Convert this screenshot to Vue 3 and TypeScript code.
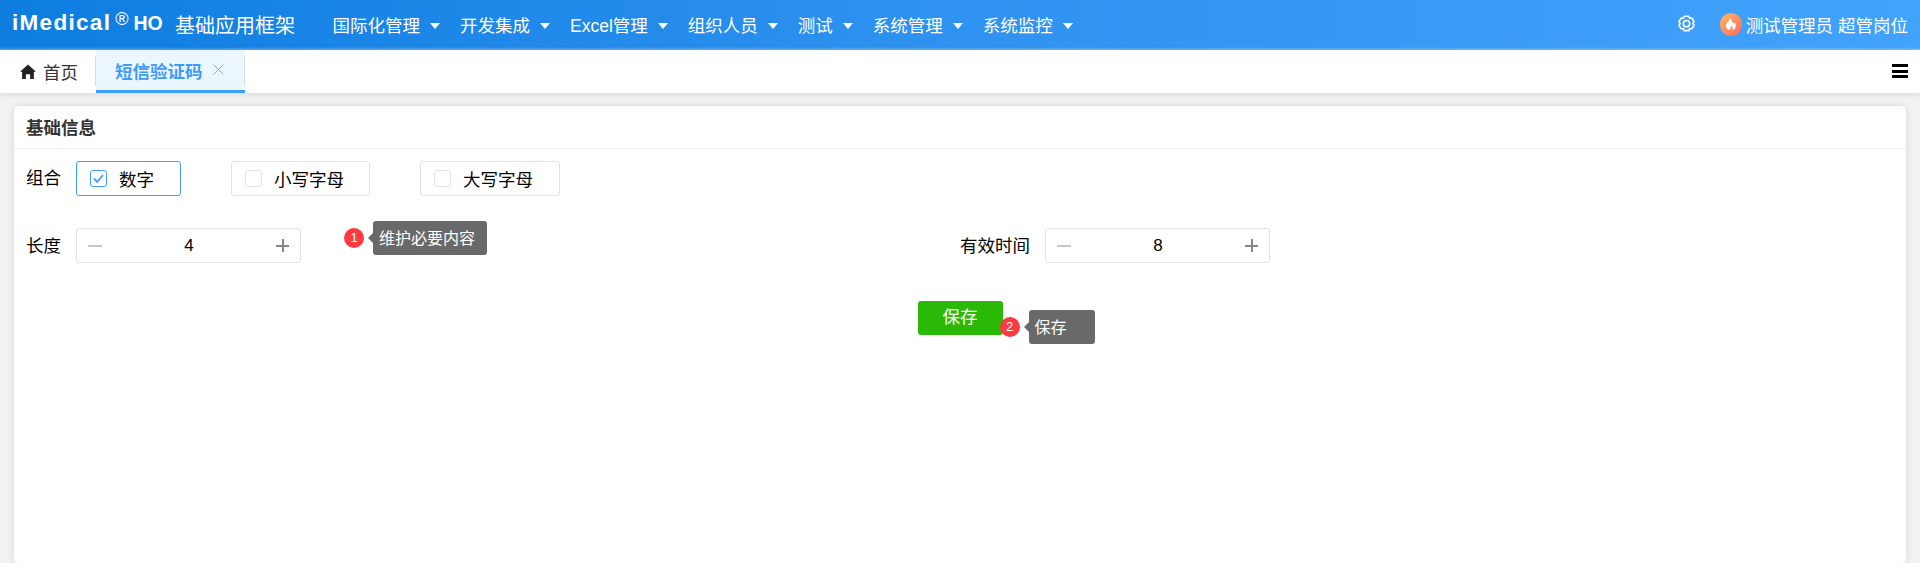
<script setup lang="ts">
const navItems: string[] = ['国际化管理', '开发集成', 'Excel管理', '组织人员', '测试', '系统管理', '系统监控']
const checks = [
  { label: '数字', on: true },
  { label: '小写字母', on: false },
  { label: '大写字母', on: false },
]
</script>

<template>
  <div class="page">
    <header class="topbar">
      <div class="logo">
        <span class="logo-main">iMedical</span><span class="logo-reg">®</span><span class="logo-ho">HO</span>
      </div>
      <div class="app-title">基础应用框架</div>
      <nav class="nav">
        <div v-for="item in navItems" :key="item" class="nav-item">
          <span>{{ item }}</span><i class="caret"></i>
        </div>
      </nav>
      <div class="top-right">
        <svg class="gear" width="19" height="19" viewBox="0 0 18 18" fill="none" stroke="#fff" stroke-width="1.5">
          <path d="M6.800 1.200h4.400l.7 1.900 2.200-.2 2.100 3.400-1.200 1.700 1.200 1.700-2.100 3.400-2.200-.2-.7 1.900H6.800l-.7-1.900-2.200.2-2.100-3.400L3 8 1.800 6.300l2.100-3.400 2.200.2z" stroke-linejoin="round" />
          <circle cx="9" cy="8.200" r="3" />
        </svg>
        <svg class="avatar" width="22" height="23" viewBox="0 0 22 23">
          <defs>
            <linearGradient id="av" x1="0" y1="0" x2="1" y2="1">
              <stop offset="0" stop-color="#fdb85f" />
              <stop offset="1" stop-color="#fb6a63" />
            </linearGradient>
          </defs>
          <ellipse cx="11" cy="11.500" rx="11" ry="11.500" fill="url(#av)" />
          <path d="M10 4.500c.4 2.500 2.600 3.700 3 6.300.8-.2 1.300-.9 1.500-1.600 1.900 2.200 1.700 6.500-1.300 7.600-.6.200-.9-.1-.7-.6.400-1.300-.1-2.500-1-3.500-.6 1-1.200 1.800-1.100 3.300 0 .6-.4.900-1 .7C5.500 15.600 5 12.400 7 10c.8-1 2.600-2.600 3-5.500z" fill="#fff" />
        </svg>
        <span class="user">测试管理员 超管岗位</span>
      </div>
    </header>

    <div class="tabs">
      <div class="tab tab-home">
        <svg width="16" height="15" viewBox="0 0 15 14"><path d="M7.500 0.500 15 7.200h-2V14H9.500V9.500h-4V14H2V7.200H0z" fill="#222" /></svg>
        <span>首页</span>
      </div>
      <div class="tab tab-active">
        <span>短信验证码</span>
        <svg class="close" width="11" height="11" viewBox="0 0 11 11" stroke="#7fa9e0" stroke-width="1" fill="none"><path d="M.5.500l10 10M10.500.500l-10 10" /></svg>
      </div>
      <div class="tab-fill"></div>
      <div class="hamburger"><i></i><i></i><i></i></div>
    </div>

    <main class="content">
      <section class="card">
        <div class="card-title">基础信息</div>
        <div class="card-body">
          <div class="row row-checks">
            <label class="field-label">组合</label>
            <div v-for="c in checks" :key="c.label" class="check" :class="{ 'check-on': c.on }">
              <span class="box">
                <svg v-if="c.on" width="13" height="11" viewBox="0 0 13 11" fill="none" stroke="#409eff" stroke-width="1.900"><path d="M2 5.500 5.200 8.800 11 2" /></svg>
              </span>
              <span>{{ c.label }}</span>
            </div>
          </div>

          <div class="row-grid">
            <div class="field">
              <label class="field-label">长度</label>
              <div class="stepper">
                <span class="sym sym-minus"></span>
                <span class="num">4</span>
                <span class="sym sym-plus"></span>
              </div>
              <div class="hint hint-one">
                <span class="badge">1</span>
                <span class="tip">维护必要内容</span>
              </div>
            </div>
            <div class="field">
              <label class="field-label field-label-wide">有效时间</label>
              <div class="stepper">
                <span class="sym sym-minus"></span>
                <span class="num">8</span>
                <span class="sym sym-plus"></span>
              </div>
            </div>
          </div>

          <div class="actions">
            <div class="save-wrap">
              <button class="save" type="button">保存</button>
              <div class="hint hint-two">
                <span class="badge">2</span>
                <span class="tip tip-save">保存</span>
              </div>
            </div>
          </div>
        </div>
      </section>
    </main>
  </div>
</template>

<style>
html, body { margin: 0; padding: 0; background: #f2f2f2; }
</style>

<style scoped>
.page {
  height: 563px;
  overflow: hidden;
  display: flex;
  flex-direction: column;
  font-family: "Liberation Sans", "Noto Sans CJK SC", sans-serif;
  font-size: 17.5px;
  color: #000;
}
.topbar {
  height: 50px;
  flex: none;
  display: flex;
  align-items: center;
  color: #fff;
  background: linear-gradient(90deg, #0d7de0 0%, #2f92f0 50%, #42a3fc 100%);
  position: relative;
  box-shadow: inset 0 -3px 3px -2px rgba(255,255,255,.45);
}
.logo { width: 175px; flex: none; display: flex; align-items: baseline; padding-left: 12px; box-sizing: border-box; font-weight: 700; margin-top: -4px; }
.logo-main { font-size: 22.500px; letter-spacing: 1.300px; }
.logo-reg { font-size: 18px; font-weight: 400; margin: 0 5px 0 4px; position: relative; top: -5px; }
.logo-ho { font-size: 19.500px; }
.app-title { font-size: 20px; width: 158px; flex: none; margin-top: -2px; }
.nav { display: flex; gap: 20px; margin-top: -1px; margin-left: -0.500px; }
.nav-item { display: flex; align-items: center; gap: 10px; white-space: nowrap; }
.caret { width: 0; height: 0; border-left: 5.500px solid transparent; border-right: 5.500px solid transparent; border-top: 6.500px solid #fff; margin-top: 2px; }
.top-right { margin-left: auto; display: flex; align-items: center; padding-right: 12px; margin-top: -2px; }
.gear { margin-right: 24px; }
.avatar { margin-right: 4px; }
.user { white-space: nowrap; }

.tabs {
  height: 43px;
  flex: none;
  background: #fff;
  display: flex;
  align-items: stretch;
  box-shadow: 0 1px 6px rgba(0,0,0,.12);
  position: relative;
  z-index: 1;
}
.tab { display: flex; align-items: center; box-sizing: border-box; position: relative; }
.tab-home { width: 96px; padding-left: 20px; gap: 7px; color: #333; padding-bottom: 1px; }
.tab-home::after, .tab-active::after { content: ""; position: absolute; right: 0; top: 6px; height: 30px; width: 1px; background: #d8dce2; }
.tab-active {
  width: 149px;
  padding-left: 19px;
  gap: 11px;
  background: #ebf6ff;
  color: #3c9cf8;
  font-weight: 700;
  border-bottom: 3px solid #3a9efa;
}
.close { margin: -2px 0 0 -1px; }
.tab-fill { flex: 1; }
.hamburger { width: 16px; margin: 14px 12px 0 0; display: flex; flex-direction: column; gap: 2.500px; }
.hamburger i { height: 3px; background: #000; display: block; }

.content { flex: 1; padding: 13px 14px 0; min-height: 0; }
.card {
  background: #fff;
  border-radius: 5px;
  height: 100%;
  box-shadow: 0 0 8px rgba(0,0,0,.12);
}
.card-title {
  height: 42px;
  line-height: 44px;
  padding-left: 13px;
  font-weight: 700;
  color: #333;
  border-bottom: 1px solid #eceef2;
  text-indent: -1px;
}
.card-body { padding: 12px 13px 0; }
.row { display: flex; align-items: center; height: 35px; }
.field-label { flex: none; width: 49px; line-height: 28px; position: relative; left: -1px; }
.row-checks .field-label { top: -1px; }
.check {
  box-sizing: border-box;
  height: 35px;
  border: 1px solid #e0e2ea;
  border-radius: 3px;
  display: flex;
  align-items: center;
  padding: 0 25px 0 13px;
  margin-right: 50px;
  gap: 12px;
}
.check:nth-child(2) { width: 105px; margin-right: 50px; padding-right: 0; gap: 12px; }
.check:nth-child(3) { width: 139px; margin-right: 50px; padding-right: 0; }
.check:nth-child(4) { width: 140px; padding-right: 0; }
.check-on { border-color: #409eff; }
.box {
  width: 17px;
  height: 17px;
  box-sizing: border-box;
  border: 1px solid #dfe2ea;
  border-radius: 3px;
  display: flex;
  align-items: center;
  justify-content: center;
  flex: none;
}
.check-on .box { border-color: #409eff; }

.row-grid { display: grid; grid-template-columns: 1fr 1fr; margin-top: 32px; }
.field { display: flex; align-items: center; position: relative; height: 35px; }
.field-label-wide { width: 85px; left: 0; }
.stepper {
  box-sizing: border-box;
  width: 225px;
  height: 35px;
  border: 1px solid #e0e2ea;
  border-radius: 3px;
  display: flex;
  align-items: center;
  justify-content: space-between;
  padding: 0 11px;
}
.num { font-size: 17px; }
.sym { width: 14px; height: 13px; position: relative; display: block; }
.sym::before, .sym::after { content: ""; position: absolute; background: #c4c6cc; }
.sym::before { left: 0; right: 0; top: 6px; height: 1.500px; }
.sym-plus { width: 13px; }
.sym-plus::before, .sym-plus::after { background: #85878d; }
.sym-minus::after { display: none; }
.sym-plus::after { top: 0; bottom: 0; left: 6px; width: 1.500px; }

.hint { position: absolute; display: flex; align-items: center; }
.hint-one { left: 317px; top: -7px; height: 34px; }
.hint-two { left: 82px; top: 9px; height: 34px; }
.badge {
  width: 20px;
  height: 20px;
  border-radius: 50%;
  background: #fd3a3f;
  color: #fff;
  font-size: 13px;
  line-height: 20px;
  text-align: center;
  flex: none;
}
.tip {
  position: relative;
  box-sizing: border-box;
  height: 34px;
  line-height: 35px;
  margin-left: 9px;
  padding: 0 12px 0 6px;
  background: #696969;
  color: #fff;
  border-radius: 3px;
  font-size: 16px;
  white-space: nowrap;
}
.tip::before {
  content: "";
  position: absolute;
  left: -5px;
  top: 12px;
  border-top: 5px solid transparent;
  border-bottom: 5px solid transparent;
  border-right: 5px solid #696969;
}
.tip-save { width: 66px; }

.actions { display: flex; justify-content: center; margin-top: 38px; }
.save-wrap { position: relative; width: 85px; }
.save {
  width: 85px;
  height: 34px;
  display: block;
  border: 0;
  border-radius: 3px;
  padding: 0 0 5px;
  background: #2ab907;
  color: #fff;
  font: inherit;
}
</style>
